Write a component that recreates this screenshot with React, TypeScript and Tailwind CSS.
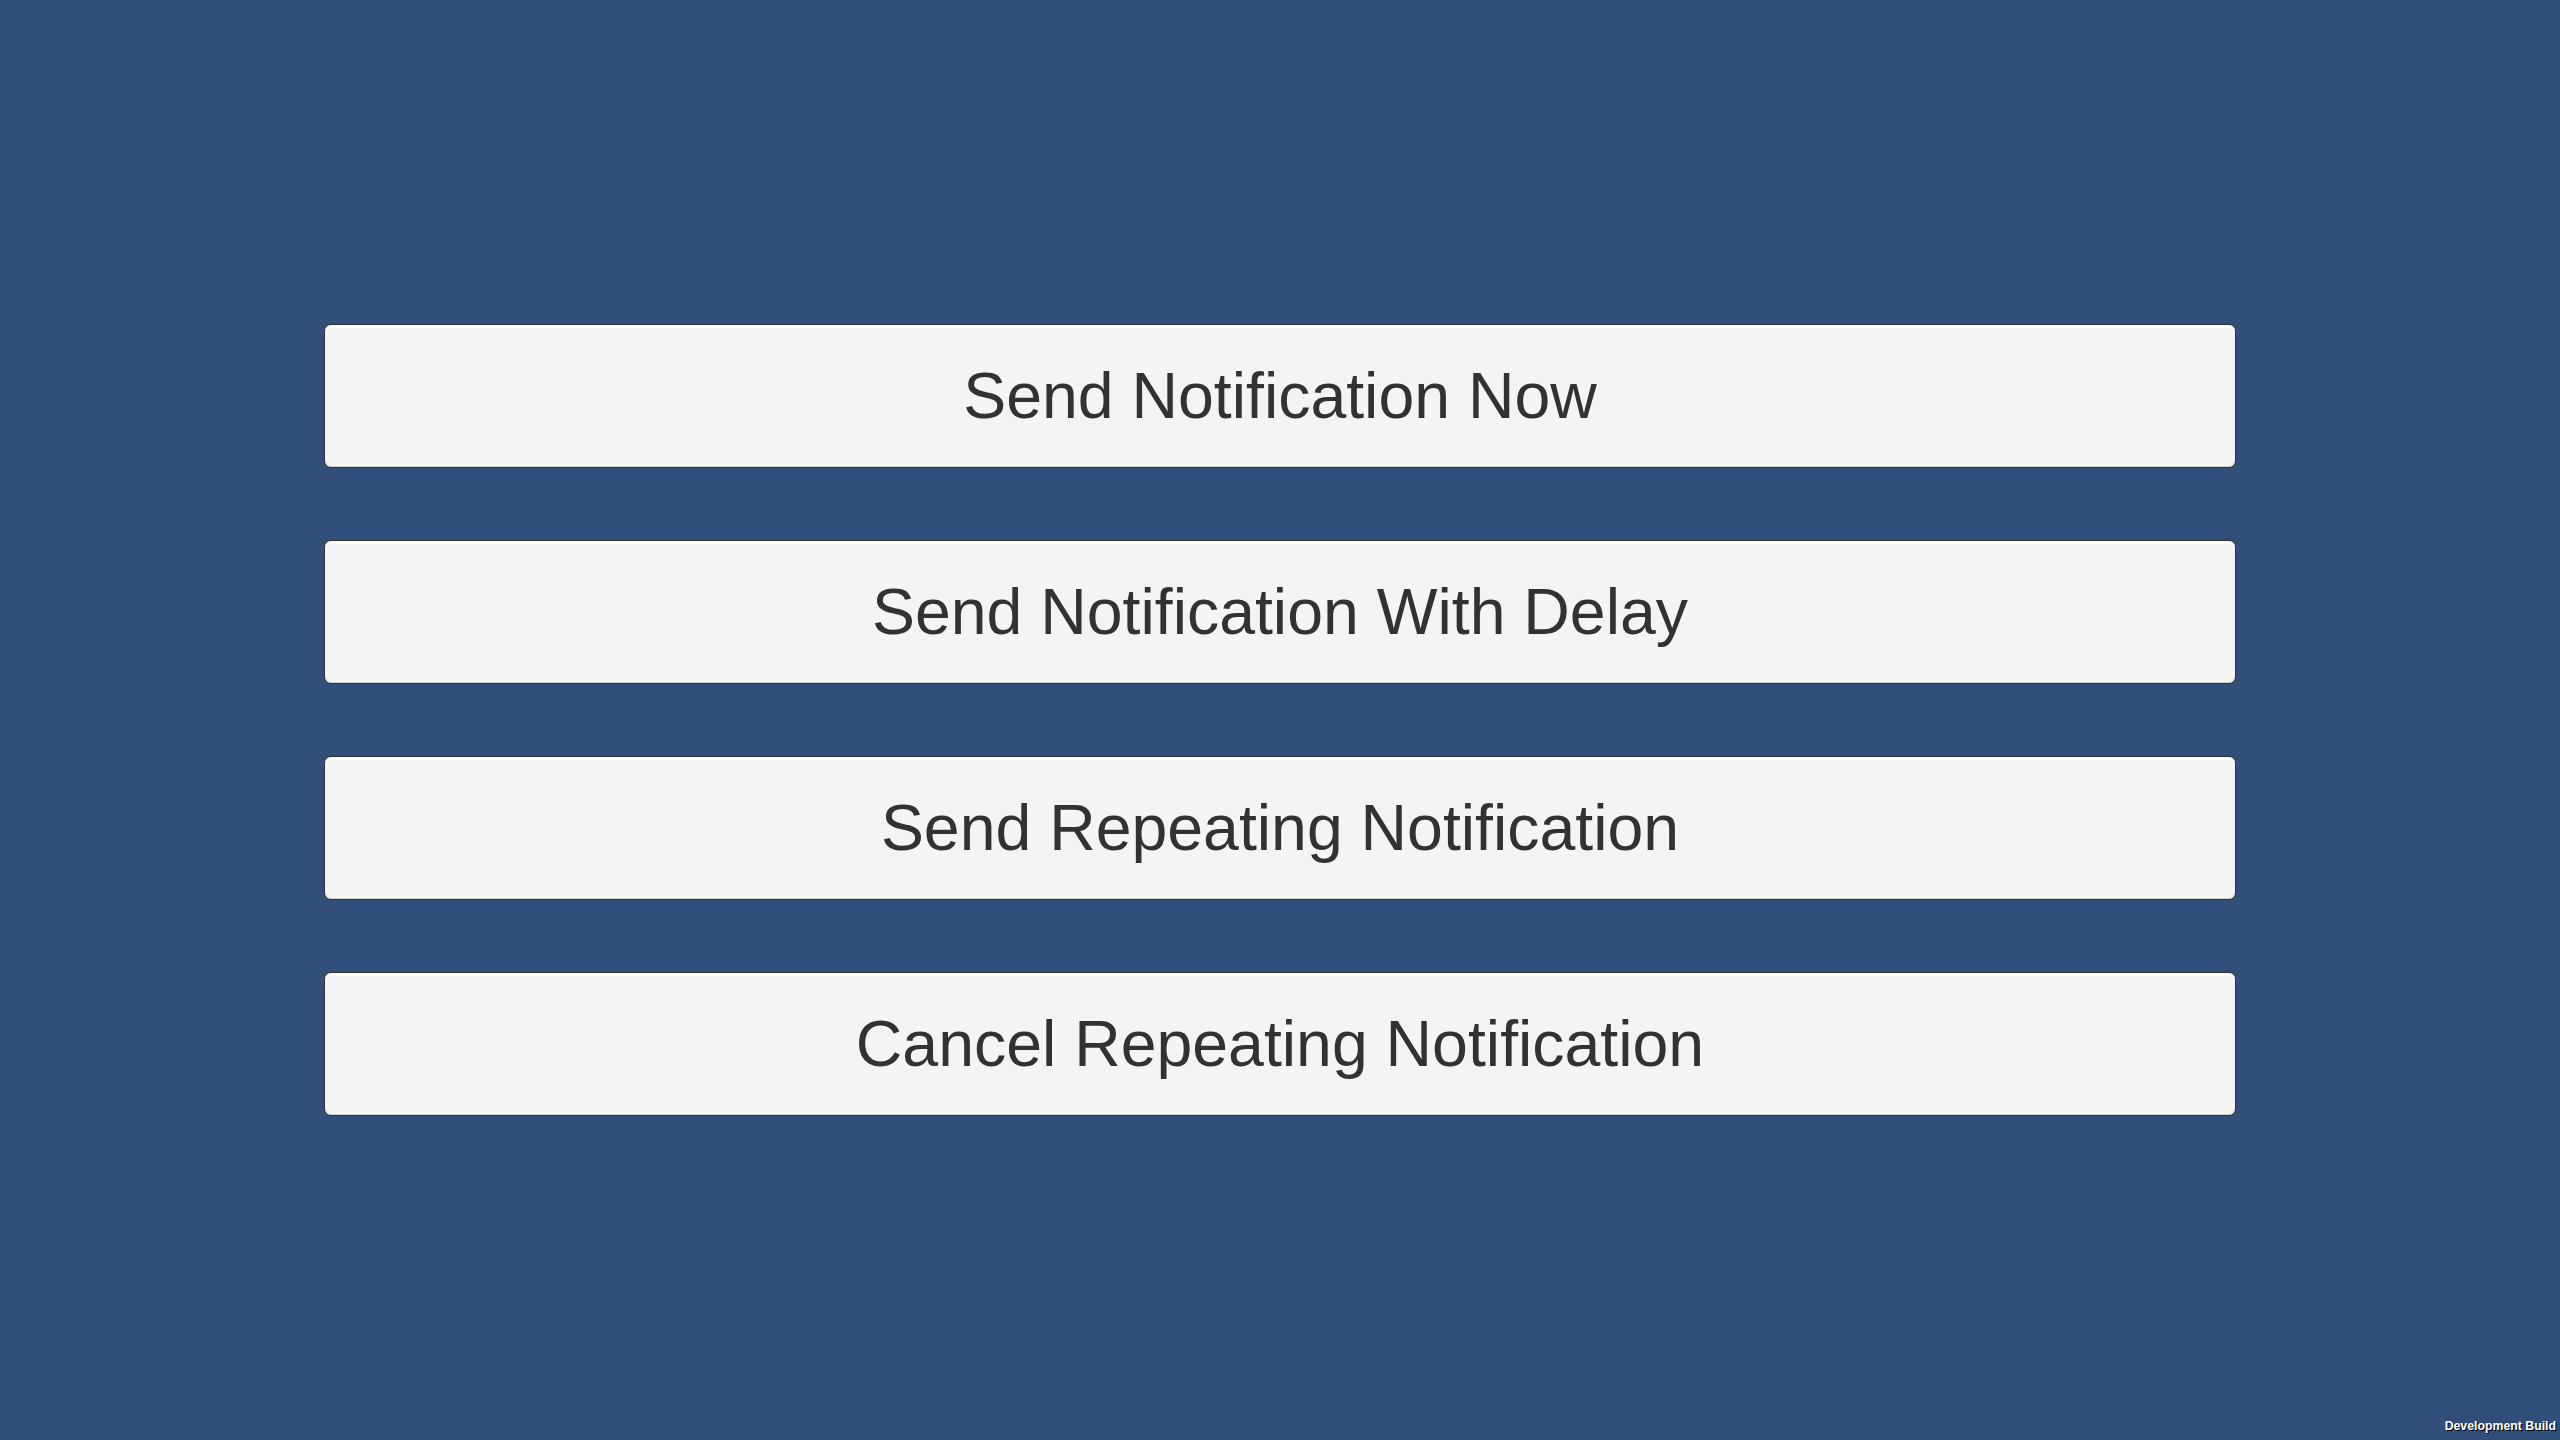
const buttons = [
  "Send Notification Now",
  "Send Notification With Delay",
  "Send Repeating Notification",
  "Cancel Repeating Notification",
];

export default function App() {
  return (
    <div
      className="relative flex h-[1440px] w-full flex-col items-center justify-center gap-[72px] bg-[#314d79]"
      style={{ fontFamily: '"Liberation Sans", Arial, sans-serif' }}
    >
      {buttons.map((label) => (
        <button
          key={label}
          className="flex h-[144px] w-[1912px] items-center justify-center rounded-[7px] border border-[#333333] bg-[#f4f4f4] text-[64.4px] leading-none text-[#323232] shadow-[inset_0_3px_0_#ffffff,inset_0_-1px_0_#d6d6d6]"
        >
          {label}
        </button>
      ))}
      <div className="absolute bottom-[8px] right-[4px] text-[12.3px] font-bold leading-none text-white [text-shadow:1px_1px_0_#000]">
        Development Build
      </div>
    </div>
  );
}
